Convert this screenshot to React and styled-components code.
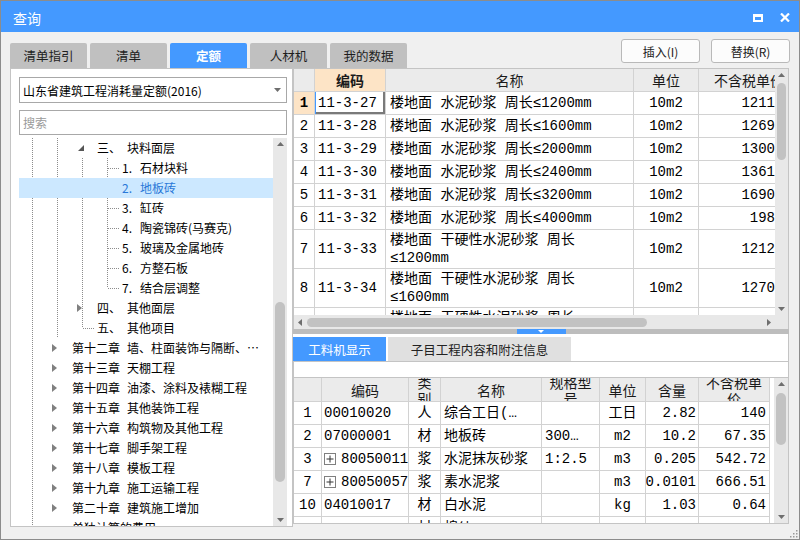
import React from "react";
import styled, { createGlobalStyle } from "styled-components";

const BLUE = "#4499ff";
const GRID_LINE = "#d2d2d2";
const FRAME = "#c4c4c4";
const TRACK = "#e8e8e8";
const THUMB = "#c2c2c2";
const ARROW = "#6e6e6e";
const GRID_FONT = `"Liberation Mono", "Noto Sans CJK SC", monospace`;

const GlobalStyle = createGlobalStyle`
	html, body { margin: 0; padding: 0; }
	body {
		background: #f0f0f0;
		font-family: "Noto Sans CJK SC", "Noto Sans", sans-serif;
	}
	*, *::before, *::after { box-sizing: border-box; }
`;

const Window = styled.div`
	position: relative;
	width: 800px;
	height: 540px;
	border: 1px solid #8c8c8c;
	background: #f0f0f0;
	display: flex;
	flex-direction: column;
	overflow: hidden;
`;
const TitleBar = styled.div`
	flex: none;
	height: 31px;
	padding: 2px 9px 0 12px;
	background: ${BLUE};
	color: #fff;
	display: flex;
	align-items: center;
	font-size: 14px;
	line-height: 1;
`;
const TitleActions = styled.div`
	margin-left: auto;
	display: flex;
	align-items: center;
	gap: 17px;
`;
const Body = styled.div`
	flex: 1;
	padding: 0 9px 0 9px;
	display: flex;
	flex-direction: column;
`;
const TopBar = styled.div`
	flex: none;
	height: 36px;
	display: flex;
	justify-content: space-between;
`;
const Tabs = styled.div`
	align-self: flex-end;
	display: flex;
	gap: 3px;
`;
const Tab = styled.div`
	width: 77px;
	height: 25px;
	display: flex;
	align-items: center;
	justify-content: center;
	border-radius: 2px 2px 0 0;
	background: ${(p) => (p.$active ? BLUE : "#c0c0c0")};
	color: ${(p) => (p.$active ? "#fff" : "#1e1e1e")};
	font-weight: ${(p) => (p.$active ? 700 : 400)};
	font-size: 12.5px;
`;
const Actions = styled.div`
	margin-top: 7px;
	display: flex;
	gap: 11px;
`;
const ActionButton = styled.div`
	width: 79px;
	height: 24px;
	display: flex;
	align-items: center;
	justify-content: center;
	background: #fcfcfc;
	border: 1px solid #b9b9b9;
	border-radius: 3px;
	font-size: 12px;
	color: #222;
`;
const Content = styled.div`
	flex: none;
	height: 459px;
	display: flex;
	align-items: flex-start;
`;

/* ---------- left panel ---------- */
const LeftPanel = styled.div`
	width: 283px;
	height: 459px;
	border: 1px solid ${FRAME};
	background: #fff;
	padding: 8px 5px 0 8px;
	display: flex;
	flex-direction: column;
`;
const Combo = styled.div`
	flex: none;
	height: 26px;
	border: 1px solid #a8a8a8;
	display: flex;
	align-items: center;
	justify-content: space-between;
	padding: 0 5px 0 3px;
	font-size: 12px;
	color: #000;
`;
const Search = styled.input`
	flex: none;
	height: 25px;
	margin: 7px 0 3px;
	border: 1px solid #a8a8a8;
	padding: 0 3px;
	font: inherit;
	font-size: 12px;
	outline: none;
	&::placeholder { color: #9a9a9a; }
`;
const Tree = styled.div`
	flex: 1;
	display: flex;
	min-height: 0;
	overflow: hidden;
`;
const TreeList = styled.div`
	flex: 1;
	overflow: hidden;
`;
const TreeRow = styled.div`
	height: 20px;
	display: flex;
	align-items: center;
	white-space: nowrap;
	font-size: 12px;
	line-height: 20px;
	background: ${(p) => (p.$selected ? "#cce8ff" : "transparent")};
	color: ${(p) => (p.$selected ? "#2a78d8" : "#000")};
`;

const dotV = (h) =>
	`repeating-linear-gradient(to bottom, #8c8c8c 0 1px, transparent 1px 2px) 13px 0 / 1px ${h} no-repeat`;
const dotH = `repeating-linear-gradient(to right, #8c8c8c 0 1px, transparent 1px 2px) 14px 10px / 11px 1px no-repeat`;
const guideBg = {
	none: "none",
	line: dotV("100%"),
	tee: `${dotV("100%")}, ${dotH}`,
	elbow: `${dotV("10px")}, ${dotH}`,
	collapsedLine: dotV("100%"),
	collapsed: "none",
	expanded: "none",
};
const Guide = styled.span`
	flex: none;
	width: 25px;
	height: 20px;
	display: flex;
	align-items: center;
	background: ${(p) => guideBg[p.$kind]};
	svg { margin-left: ${(p) => (p.$kind === "expanded" ? 9 : 8)}px; }
`;
const Num = styled.span`
	flex: none;
	display: inline-block;
	margin-left: 3px;
	width: ${(p) => p.$w}px;
`;

/* ---------- scrollbars ---------- */
const VTrack = styled.div`
	flex: none;
	width: ${(p) => p.$w}px;
	background: ${TRACK};
	display: flex;
	flex-direction: column;
	align-items: center;
`;
const HTrack = styled.div`
	flex: 1;
	height: 14px;
	background: ${TRACK};
	display: flex;
	align-items: center;
`;
const ArrowSlot = styled.div`
	flex: none;
	width: ${(p) => (p.$h ? "12px" : "100%")};
	height: ${(p) => (p.$h ? "100%" : "12px")};
	display: flex;
	align-items: center;
	justify-content: center;
`;
const VThumb = styled.div`
	flex: none;
	width: ${(p) => p.$thick}px;
	height: ${(p) => p.$size}px;
	margin-top: ${(p) => p.$offset}px;
	border-radius: 5px;
	background: ${THUMB};
`;
const HThumb = styled.div`
	flex: none;
	height: 9px;
	width: ${(p) => p.$size}px;
	margin-left: ${(p) => p.$offset}px;
	border-radius: 5px;
	background: ${THUMB};
`;
const Fill = styled.div`
	flex: 1;
`;
const Corner = styled.div`
	flex: none;
	width: 13px;
	height: 14px;
	background: ${TRACK};
`;

const Up = () => (
	<svg width="7" height="4" viewBox="0 0 7 4">
		<path d="M0 4L3.5 0L7 4Z" fill={ARROW} />
	</svg>
);
const Down = () => (
	<svg width="7" height="4" viewBox="0 0 7 4">
		<path d="M0 0L3.5 4L7 0Z" fill={ARROW} />
	</svg>
);
const Left = () => (
	<svg width="4" height="7" viewBox="0 0 4 7">
		<path d="M4 0L0 3.5L4 7Z" fill={ARROW} />
	</svg>
);
const Right = () => (
	<svg width="4" height="7" viewBox="0 0 4 7">
		<path d="M0 0L4 3.5L0 7Z" fill={ARROW} />
	</svg>
);

function VScroll({ w, offset, size, thick }) {
	return (
		<VTrack $w={w}>
			<ArrowSlot>
				<Up />
			</ArrowSlot>
			<VThumb $offset={offset} $size={size} $thick={thick} />
			<Fill />
			<ArrowSlot>
				<Down />
			</ArrowSlot>
		</VTrack>
	);
}

/* ---------- right column ---------- */
const RightColumn = styled.div`
	width: 496px;
	display: flex;
	flex-direction: column;
`;
const GridFrame = styled.div`
	height: 261px;
	border: 1px solid ${FRAME};
	border-bottom: none;
	background: #fff;
	display: flex;
	flex-direction: column;
`;
const GridMain = styled.div`
	height: 246px;
	display: flex;
`;
const GridBottomBar = styled.div`
	height: 14px;
	display: flex;
`;
const Table = styled.div`
	width: ${(p) => p.$w}px;
	flex: none;
	overflow: hidden;
	display: flex;
	flex-direction: column;
	font-family: ${GRID_FONT};
	font-size: 14px;
	color: #000;
`;
const Row = styled.div`
	flex: none;
	display: grid;
	grid-template-columns: ${(p) => p.$cols};
	height: ${(p) => p.$h}px;
`;
const alignMap = { left: "flex-start", center: "center", right: "flex-end" };
const Cell = styled.div`
	min-width: 0;
	display: flex;
	flex-direction: column;
	justify-content: center;
	align-items: ${(p) => alignMap[p.$align || "left"]};
	padding: 0 ${(p) => p.$pr ?? 3}px 0 ${(p) => p.$pl ?? 3}px;
	border-right: ${(p) => (p.$noRight ? "none" : `1px solid ${GRID_LINE}`)};
	border-bottom: 1px solid ${GRID_LINE};
	overflow: hidden;
	white-space: nowrap;
	line-height: 18px;
	background: ${(p) => (p.$current ? "#fde4c6" : "#fff")};
	font-weight: ${(p) => (p.$current ? 700 : 400)};
	box-shadow: ${(p) =>
		p.$focus ? `inset 1px 0 0 ${BLUE}, inset -2px -2px 0 #7a7a7a` : "none"};
`;
const HeadCell = styled(Cell)`
	background: ${(p) => (p.$current ? "#fde4c6" : "#ebebeb")};
	font-family: "Noto Sans CJK SC", sans-serif;
	color: #1a1a1a;
	line-height: ${(p) => (p.$two ? 16 : 18)}px;
	text-align: center;
`;
const CodeWrap = styled.span`
	display: flex;
	align-items: center;
	gap: 5px;
`;

const Splitter = styled.div`
	height: 5px;
	background: #bdbdbd;
	display: flex;
	justify-content: center;
`;
const SplitHandle = styled.div`
	width: 49px;
	height: 5px;
	background: ${BLUE};
	display: flex;
	justify-content: center;
	align-items: center;
`;
const BottomSection = styled.div`
	height: 190px;
	background: #fff;
	border-right: 1px solid ${FRAME};
	padding-top: 3px;
	display: flex;
	flex-direction: column;
`;
const BottomTabs = styled.div`
	flex: none;
	height: 24px;
	display: flex;
	gap: 2px;
`;
const BottomTab = styled.div`
	width: ${(p) => p.$w}px;
	display: flex;
	align-items: center;
	justify-content: center;
	font-size: 12.5px;
	background: ${(p) => (p.$active ? BLUE : "#e0e0e0")};
	color: ${(p) => (p.$active ? "#fff" : "#222")};
`;
const Strip = styled.div`
	flex: none;
	height: 16px;
	border-top: 1px solid ${FRAME};
	border-left: 1px solid ${FRAME};
`;
const BottomGrid = styled.div`
	flex: none;
	height: 147px;
	border: 1px solid ${FRAME};
	border-right: none;
	display: flex;
`;
const Grip = styled.svg`
	position: absolute;
	right: 1px;
	bottom: 1px;
`;

/* ---------- data ---------- */
const TABS = ["清单指引", "清单", "定额", "人材机", "我的数据"];

const L3 = ["line", "line", "line"];
const TREE = [
	{ g: ["line", "line"], node: "expanded", num: "三、", w: 30, label: "块料面层" },
	{ g: L3, node: "tee", num: "1.", w: 18, label: "石材块料" },
	{ g: ["none", "none", "none"], node: "none", num: "2.", w: 18, label: "地板砖", selected: true },
	{ g: L3, node: "tee", num: "3.", w: 18, label: "缸砖" },
	{ g: L3, node: "tee", num: "4.", w: 18, label: "陶瓷锦砖(马赛克)" },
	{ g: L3, node: "tee", num: "5.", w: 18, label: "玻璃及金属地砖" },
	{ g: L3, node: "tee", num: "6.", w: 18, label: "方整石板" },
	{ g: L3, node: "elbow", num: "7.", w: 18, label: "结合层调整" },
	{ g: ["line", "line"], node: "collapsedLine", num: "四、", w: 30, label: "其他面层" },
	{ g: ["line", "line"], node: "elbow", num: "五、", w: 30, label: "其他项目" },
	{ g: ["line"], node: "collapsed", num: "第十二章", w: 55, label: "墙、柱面装饰与隔断、…" },
	{ g: ["line"], node: "collapsed", num: "第十三章", w: 55, label: "天棚工程" },
	{ g: ["line"], node: "collapsed", num: "第十四章", w: 55, label: "油漆、涂料及裱糊工程" },
	{ g: ["line"], node: "collapsed", num: "第十五章", w: 55, label: "其他装饰工程" },
	{ g: ["line"], node: "collapsed", num: "第十六章", w: 55, label: "构筑物及其他工程" },
	{ g: ["line"], node: "collapsed", num: "第十七章", w: 55, label: "脚手架工程" },
	{ g: ["line"], node: "collapsed", num: "第十八章", w: 55, label: "模板工程" },
	{ g: ["line"], node: "collapsed", num: "第十九章", w: 55, label: "施工运输工程" },
	{ g: ["line"], node: "collapsed", num: "第二十章", w: 55, label: "建筑施工增加" },
	{ g: ["line"], node: "none", num: "单独计算的费用", w: 100, label: "" },
];

const TOP_COLS = "21px 71px 248px 65px 76px";
const TOP_ROWS = [
	{ n: 1, code: "11-3-27", name: ["楼地面 水泥砂浆 周长≤1200mm"], price: "1211" },
	{ n: 2, code: "11-3-28", name: ["楼地面 水泥砂浆 周长≤1600mm"], price: "1269" },
	{ n: 3, code: "11-3-29", name: ["楼地面 水泥砂浆 周长≤2000mm"], price: "1300" },
	{ n: 4, code: "11-3-30", name: ["楼地面 水泥砂浆 周长≤2400mm"], price: "1361" },
	{ n: 5, code: "11-3-31", name: ["楼地面 水泥砂浆 周长≤3200mm"], price: "1690" },
	{ n: 6, code: "11-3-32", name: ["楼地面 水泥砂浆 周长≤4000mm"], price: "198" },
	{ n: 7, code: "11-3-33", name: ["楼地面 干硬性水泥砂浆 周长", "≤1200mm"], price: "1212" },
	{ n: 8, code: "11-3-34", name: ["楼地面 干硬性水泥砂浆 周长", "≤1600mm"], price: "1270" },
	{ n: 9, code: "11-3-35", name: ["楼地面 干硬性水泥砂浆 周长", "≤2000mm"], price: "1329" },
];

const BOTTOM_COLS = "28px 87px 32px 101px 58px 46px 53px 71px";
const BOTTOM_ROWS = [
	{ n: "1", code: "00010020", type: "人", name: "综合工日(…", spec: "", unit: "工日", qty: "2.82", price: "140" },
	{ n: "2", code: "07000001", type: "材", name: "地板砖", spec: "300…", unit: "m2", qty: "10.2", price: "67.35" },
	{ n: "3", code: "80050011", plus: true, type: "浆", name: "水泥抹灰砂浆", spec: "1:2.5", unit: "m3", qty: "0.205", price: "542.72" },
	{ n: "7", code: "80050057", plus: true, type: "浆", name: "素水泥浆", spec: "", unit: "m3", qty: "0.0101", price: "666.51" },
	{ n: "10", code: "04010017", type: "材", name: "白水泥", spec: "", unit: "kg", qty: "1.03", price: "0.64" },
	{ n: "", code: "", type: "材", name: "棉纱", spec: "", unit: "", qty: "", price: "" },
];

const PlusBox = () => (
	<svg width="12" height="12" viewBox="0 0 12 12">
		<rect x="0.5" y="0.5" width="11" height="11" fill="#fff" stroke="#7f7f7f" />
		<path d="M2.5 6h7M6 2.5v7" stroke="#333" strokeWidth="1" />
	</svg>
);

function TreeNode({ kind }) {
	if (kind === "expanded")
		return (
			<svg width="6" height="6" viewBox="0 0 6 6">
				<path d="M6 0V6H0Z" fill="#555" />
			</svg>
		);
	if (kind === "collapsed" || kind === "collapsedLine")
		return (
			<svg width="5" height="8" viewBox="0 0 5 8">
				<path d="M0 0L5 4L0 8Z" fill="#808080" />
			</svg>
		);
	return null;
}

function App() {
	return (
		<>
			<GlobalStyle />
			<Window>
				<TitleBar>
					<span>查询</span>
					<TitleActions>
						<svg width="10" height="8" viewBox="0 0 10 8">
							<path d="M0 0H10V8H0ZM2 3V6H8V3Z" fill="#fff" fillRule="evenodd" />
						</svg>
						<svg width="10" height="9" viewBox="0 0 10 9">
							<path d="M1 0.5L9 8.5M9 0.5L1 8.5" stroke="#fff" strokeWidth="2.2" />
						</svg>
					</TitleActions>
				</TitleBar>
				<Body>
					<TopBar>
						<Tabs>
							{TABS.map((t) => (
								<Tab key={t} $active={t === "定额"}>
									{t}
								</Tab>
							))}
						</Tabs>
						<Actions>
							<ActionButton>插入(I)</ActionButton>
							<ActionButton>替换(R)</ActionButton>
						</Actions>
					</TopBar>
					<Content>
						<LeftPanel>
							<Combo>
								<span>山东省建筑工程消耗量定额(2016)</span>
								<Down />
							</Combo>
							<Search placeholder="搜索" />
							<Tree>
								<TreeList>
									{TREE.map((r, i) => (
										<TreeRow key={i} $selected={r.selected}>
											{r.g.map((k, j) => (
												<Guide key={j} $kind={k} />
											))}
											<Guide $kind={r.node}>
												<TreeNode kind={r.node} />
											</Guide>
											<Num $w={r.w}>{r.num}</Num>
											<span>{r.label}</span>
										</TreeRow>
									))}
								</TreeList>
								<VScroll w={14} offset={152} size={180} thick={10} />
							</Tree>
						</LeftPanel>
						<RightColumn>
							<GridFrame>
								<GridMain>
									<Table $w={481}>
										<Row $cols={TOP_COLS} $h={23}>
											<HeadCell />
											<HeadCell $align="center" $current>
												编码
											</HeadCell>
											<HeadCell $align="center">名称</HeadCell>
											<HeadCell $align="center">单位</HeadCell>
											<HeadCell $pl={15} $noRight>
												不含税单价
											</HeadCell>
										</Row>
										{TOP_ROWS.map((r) => (
											<Row key={r.n} $cols={TOP_COLS} $h={r.name.length > 1 ? 39 : 23}>
												<Cell $align="center" $pl={0} $pr={0} $current={r.n === 1}>
													{r.n}
												</Cell>
												<Cell $focus={r.n === 1}>{r.code}</Cell>
												<Cell $pl={4}>
													{r.name.map((l, i) => (
														<span key={i}>{l}</span>
													))}
												</Cell>
												<Cell $align="center">10m2</Cell>
												<Cell $align="right" $pr={0} $noRight>
													{r.price}
												</Cell>
											</Row>
										))}
									</Table>
									<VScroll w={13} offset={2} size={77} thick={9} />
								</GridMain>
								<GridBottomBar>
									<HTrack>
										<ArrowSlot $h>
											<Left />
										</ArrowSlot>
										<HThumb $offset={1} $size={340} />
										<Fill />
										<ArrowSlot $h>
											<Right />
										</ArrowSlot>
									</HTrack>
									<Corner />
								</GridBottomBar>
							</GridFrame>
							<Splitter>
								<SplitHandle>
									<svg width="6" height="3" viewBox="0 0 6 3">
										<path d="M0 0H6L3 3Z" fill="#fff" />
									</svg>
								</SplitHandle>
							</Splitter>
							<BottomSection>
								<BottomTabs>
									<BottomTab $w={93} $active>
										工料机显示
									</BottomTab>
									<BottomTab $w={183}>子目工程内容和附注信息</BottomTab>
								</BottomTabs>
								<Strip />
								<BottomGrid>
									<Table $w={476}>
										<Row $cols={BOTTOM_COLS} $h={24}>
											<HeadCell />
											<HeadCell $align="center">编码</HeadCell>
											<HeadCell $align="center" $two $pl={0} $pr={0}>
												类<br />别
											</HeadCell>
											<HeadCell $align="center">名称</HeadCell>
											<HeadCell $align="center" $two $pl={0} $pr={0}>
												规格型<br />号
											</HeadCell>
											<HeadCell $align="center">单位</HeadCell>
											<HeadCell $align="center">含量</HeadCell>
											<HeadCell $align="center" $two $pl={0} $pr={0}>
												不含税单<br />价
											</HeadCell>
										</Row>
										{BOTTOM_ROWS.map((r, i) => (
											<Row key={i} $cols={BOTTOM_COLS} $h={23}>
												<Cell $align="center" $pl={0} $pr={0}>
													{r.n}
												</Cell>
												<Cell $pl={2} $pr={0}>
													<CodeWrap>
														{r.plus && <PlusBox />}
														{r.code}
													</CodeWrap>
												</Cell>
												<Cell $align="center" $pl={0} $pr={0}>
													{r.type}
												</Cell>
												<Cell>{r.name}</Cell>
												<Cell $pl={3}>{r.spec}</Cell>
												<Cell $align="center">{r.unit}</Cell>
												<Cell $align="right" $pr={2}>
													{r.qty}
												</Cell>
												<Cell $align="right">{r.price}</Cell>
											</Row>
										))}
									</Table>
									<Fill />
									<VScroll w={14} offset={3} size={52} thick={10} />
								</BottomGrid>
							</BottomSection>
						</RightColumn>
					</Content>
				</Body>
				<Grip width="10" height="10" viewBox="0 0 10 10">
					<g fill="#9a9a9a">
						<rect x="8" y="2" width="1.5" height="1.5" />
						<rect x="5" y="5" width="1.5" height="1.5" />
						<rect x="8" y="5" width="1.5" height="1.5" />
						<rect x="2" y="8" width="1.5" height="1.5" />
						<rect x="5" y="8" width="1.5" height="1.5" />
						<rect x="8" y="8" width="1.5" height="1.5" />
					</g>
				</Grip>
			</Window>
		</>
	);
}

export default App;
